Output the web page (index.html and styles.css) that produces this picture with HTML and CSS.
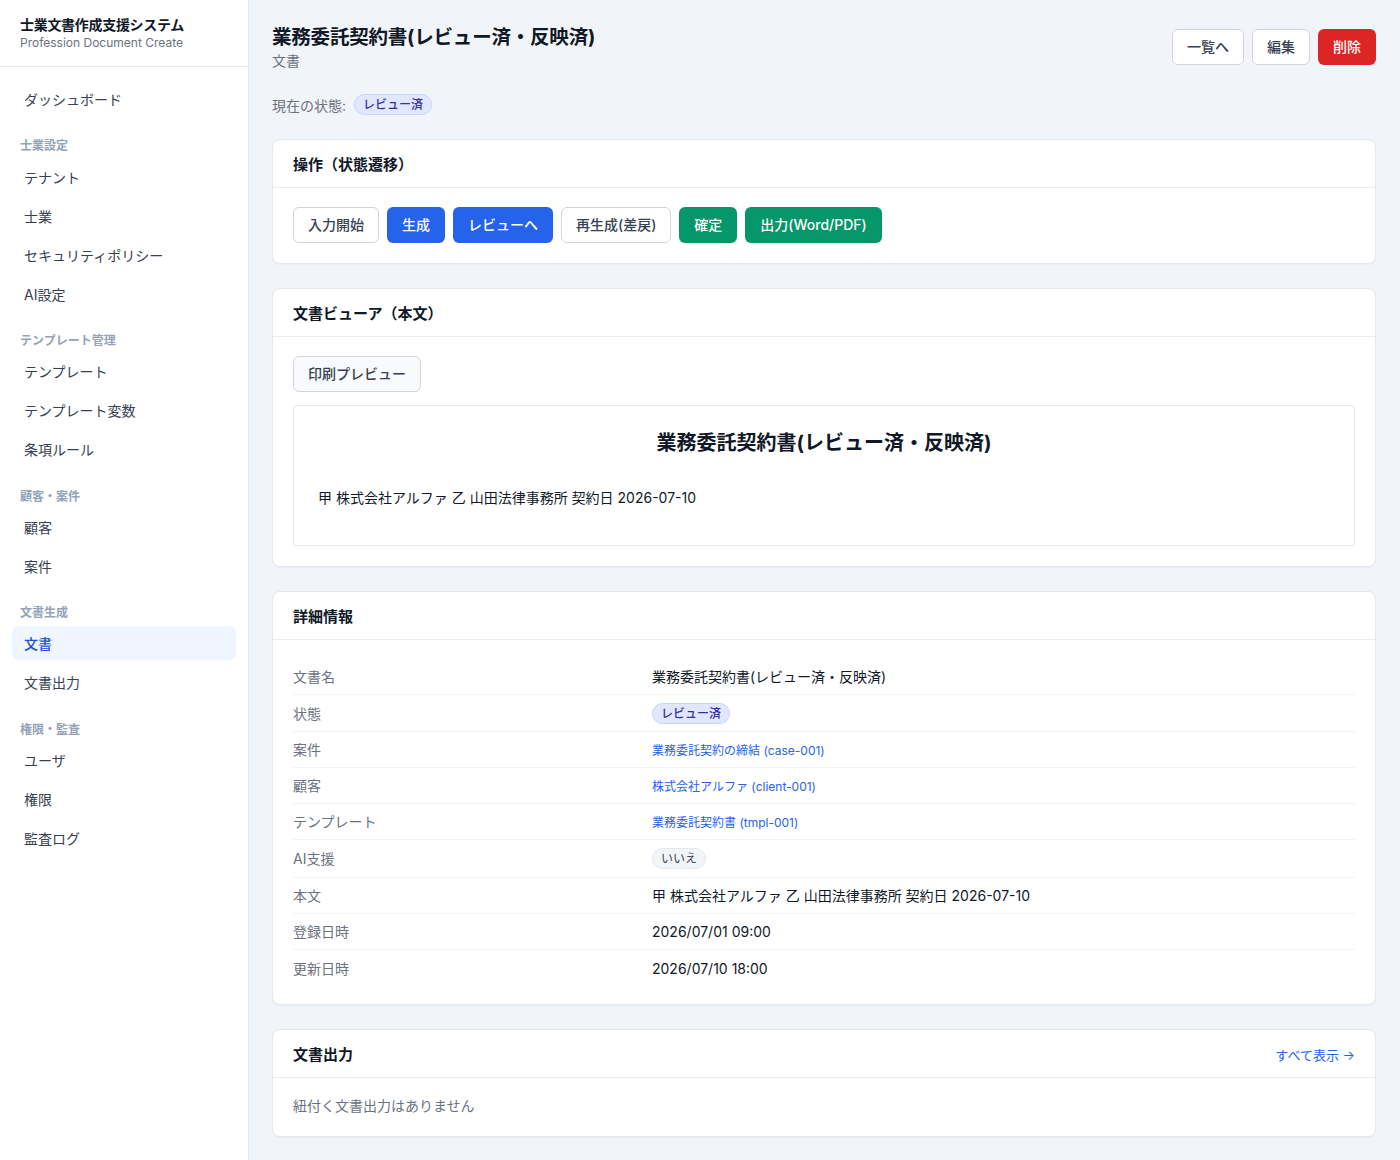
FILE: index.html
```html
<!DOCTYPE html>
<html lang="ja">
<head>
<meta charset="utf-8">
<title>業務委託契約書(レビュー済・反映済)</title>
<link rel="stylesheet" href="styles.css">
</head>
<body>
<div class="app">
  <aside class="sidebar">
    <div class="brand">
      <div class="brand-title">士業文書作成支援システム</div>
      <div class="brand-sub">Profession Document Create</div>
    </div>
    <nav class="nav">
      <a class="nav-item">ダッシュボード</a>
      <div class="nav-label">士業設定</div>
      <a class="nav-item">テナント</a>
      <a class="nav-item">士業</a>
      <a class="nav-item">セキュリティポリシー</a>
      <a class="nav-item">AI設定</a>
      <div class="nav-label">テンプレート管理</div>
      <a class="nav-item">テンプレート</a>
      <a class="nav-item">テンプレート変数</a>
      <a class="nav-item">条項ルール</a>
      <div class="nav-label">顧客・案件</div>
      <a class="nav-item">顧客</a>
      <a class="nav-item">案件</a>
      <div class="nav-label">文書生成</div>
      <a class="nav-item active">文書</a>
      <a class="nav-item">文書出力</a>
      <div class="nav-label">権限・監査</div>
      <a class="nav-item">ユーザ</a>
      <a class="nav-item">権限</a>
      <a class="nav-item">監査ログ</a>
    </nav>
  </aside>
  <main class="main">
    <div class="page-head">
      <div>
        <h1 class="page-title">業務委託契約書(レビュー済・反映済)</h1>
        <div class="page-sub">文書</div>
      </div>
      <div class="head-actions">
        <button class="btn btn-outline">一覧へ</button>
        <button class="btn btn-outline">編集</button>
        <button class="btn btn-red">削除</button>
      </div>
    </div>
    <div class="status-line">
      <span>現在の状態:</span>
      <span class="badge badge-indigo">レビュー済</span>
    </div>

    <section class="card">
      <div class="card-head"><h2>操作（状態遷移）</h2></div>
      <div class="card-body actions">
        <button class="btn btn-outline">入力開始</button>
        <button class="btn btn-blue">生成</button>
        <button class="btn btn-blue">レビューへ</button>
        <button class="btn btn-outline">再生成(差戻)</button>
        <button class="btn btn-green">確定</button>
        <button class="btn btn-green">出力(Word/PDF)</button>
      </div>
    </section>

    <section class="card">
      <div class="card-head"><h2>文書ビューア（本文）</h2></div>
      <div class="card-body">
        <button class="btn btn-light">印刷プレビュー</button>
        <div class="doc">
          <div class="doc-title">業務委託契約書(レビュー済・反映済)</div>
          <p class="doc-text">甲 株式会社アルファ 乙 山田法律事務所 契約日 2026-07-10</p>
        </div>
      </div>
    </section>

    <section class="card">
      <div class="card-head"><h2>詳細情報</h2></div>
      <div class="card-body details-body">
        <dl class="details">
          <div class="row"><dt>文書名</dt><dd>業務委託契約書(レビュー済・反映済)</dd></div>
          <div class="row row-badge"><dt>状態</dt><dd><span class="badge badge-indigo">レビュー済</span></dd></div>
          <div class="row"><dt>案件</dt><dd><a class="link">業務委託契約の締結 (case-001)</a></dd></div>
          <div class="row"><dt>顧客</dt><dd><a class="link">株式会社アルファ (client-001)</a></dd></div>
          <div class="row"><dt>テンプレート</dt><dd><a class="link">業務委託契約書 (tmpl-001)</a></dd></div>
          <div class="row row-badge-lg"><dt>AI支援</dt><dd><span class="badge badge-gray">いいえ</span></dd></div>
          <div class="row"><dt>本文</dt><dd>甲 株式会社アルファ 乙 山田法律事務所 契約日 2026-07-10</dd></div>
          <div class="row"><dt>登録日時</dt><dd>2026/07/01 09:00</dd></div>
          <div class="row"><dt>更新日時</dt><dd>2026/07/10 18:00</dd></div>
        </dl>
      </div>
    </section>

    <section class="card">
      <div class="card-head head-split">
        <h2>文書出力</h2>
        <a class="more-link">すべて表示 <span class="arrow">→</span></a>
      </div>
      <div class="card-body empty-body">
        <p class="empty">紐付く文書出力はありません</p>
      </div>
    </section>
  </main>
</div>
</body>
</html>
```
FILE: styles.css
```css
* { box-sizing: border-box; }
html, body { margin: 0; padding: 0; }
body {
  font-family: "Inter", "Noto Sans CJK JP", "Noto Sans", sans-serif;
  font-size: 14px;
  color: #111827;
  background: #f1f4f8;
}
.app { display: flex; min-height: 1160px; }

.sidebar {
  width: 249px;
  flex: 0 0 249px;
  background: #ffffff;
  border-right: 1px solid #e5e7eb;
}
.brand {
  padding: 15px 20px 15px;
  border-bottom: 1px solid #e5e7eb;
}
.brand-title {
  font-size: 14px;
  line-height: 20px;
  font-weight: 700;
  color: #111827;
  letter-spacing: -0.3px;
}
.brand-sub {
  font-size: 12px;
  line-height: 16px;
  color: #6b7280;
}
.nav {
  display: flex;
  flex-direction: column;
  padding: 15px 12px;
}
.nav-item {
  display: flex;
  align-items: center;
  height: 34px;
  padding: 0 12px;
  margin-bottom: 5px;
  border-radius: 6px;
  color: #374151;
  font-size: 14px;
  cursor: pointer;
}
.nav-item.active {
  background: #eff6ff;
  color: #1d4ed8;
  font-weight: 500;
}
.nav-label {
  padding: 17.4px 8px 0;
  margin-bottom: 5.2px;
  font-size: 12px;
  line-height: 16px;
  font-weight: 600;
  color: #94a3b8;
}

.main {
  flex: 1;
  padding: 23px 24px 24px 23px;
  min-width: 0;
}
.page-head {
  display: flex;
  justify-content: space-between;
  align-items: center;
}
.page-title {
  margin: 0;
  font-size: 19.5px;
  line-height: 28px;
  font-weight: 700;
  color: #111827;
  letter-spacing: -0.2px;
}
.page-sub {
  font-size: 14px;
  line-height: 20px;
  color: #6b7280;
}
.head-actions { display: flex; gap: 8px; }

.btn {
  font-family: inherit;
  font-size: 14px;
  font-weight: 500;
  height: 36px;
  padding: 0 14px;
  border-radius: 6px;
  border: 1px solid transparent;
  cursor: pointer;
  line-height: 20px;
}
.btn-outline { background: #ffffff; border-color: #d1d5db; color: #374151; }
.btn-light { background: #f8fafc; border-color: #d1d5db; color: #374151; }
.btn-blue { background: #2563eb; color: #ffffff; }
.btn-green { background: #059669; color: #ffffff; }
.btn-red { background: #dc2626; color: #ffffff; }

.status-line {
  display: flex;
  align-items: center;
  gap: 8px;
  margin-top: 23px;
  color: #6b7280;
  font-size: 14px;
}
.badge {
  display: inline-block;
  font-size: 12px;
  line-height: 17px;
  padding: 1px 8px;
  border-radius: 999px;
  border: 1px solid transparent;
  font-weight: 500;
}
.badge-indigo { background: #e0e7ff; border-color: #c7d2fe; color: #3730a3; }
.badge-gray { background: #f1f5f9; border-color: #e2e8f0; color: #374151; font-weight: 400; }

.card {
  background: #ffffff;
  border: 1px solid #e5e7eb;
  border-radius: 8px;
  box-shadow: 0 1px 2px rgba(15, 23, 42, 0.04);
  margin-top: 24px;
}
.card-head {
  padding: 15px 20px 12px;
  border-bottom: 1px solid #e8ebf0;
}
.card-head h2 {
  margin: 0;
  font-size: 15px;
  line-height: 20px;
  font-weight: 700;
  color: #111827;
}
.head-split { display: flex; justify-content: space-between; align-items: center; }
.more-link {
  color: #2563eb;
  font-size: 13px;
  line-height: 20px;
  cursor: pointer;
}
.card-body { padding: 19px 20px 20px; }
.details-body { padding-bottom: 18px; }
.empty-body { padding-top: 18px; }
.actions { display: flex; gap: 8px; }

.doc {
  margin-top: 13px;
  border: 1px solid #e5e7eb;
  border-radius: 4px;
  padding: 24px 24px 24px;
}
.doc-title {
  text-align: center;
  font-size: 20px;
  line-height: 26px;
  font-weight: 700;
  color: #111827;
}
.doc-text {
  margin: 32px 0 13px;
  font-size: 14px;
  line-height: 20px;
  color: #111827;
}

.details { margin: 0; }
.row {
  display: grid;
  grid-template-columns: 359px 1fr;
  align-items: center;
  height: 36px;
  border-bottom: 1px solid #f1f3f6;
}
.row-badge { height: 37px; }
.row-badge-lg { height: 38px; }
.row:last-child { border-bottom: none; }
.row dt { color: #6b7280; font-size: 14px; line-height: 19px; }
.row dd { margin: 0; color: #111827; font-size: 14px; line-height: 19px; }
.link { color: #2563eb; font-size: 12px; cursor: pointer; }

.empty {
  margin: 0;
  color: #6b7280;
  font-size: 14px;
  line-height: 20px;
}
```
